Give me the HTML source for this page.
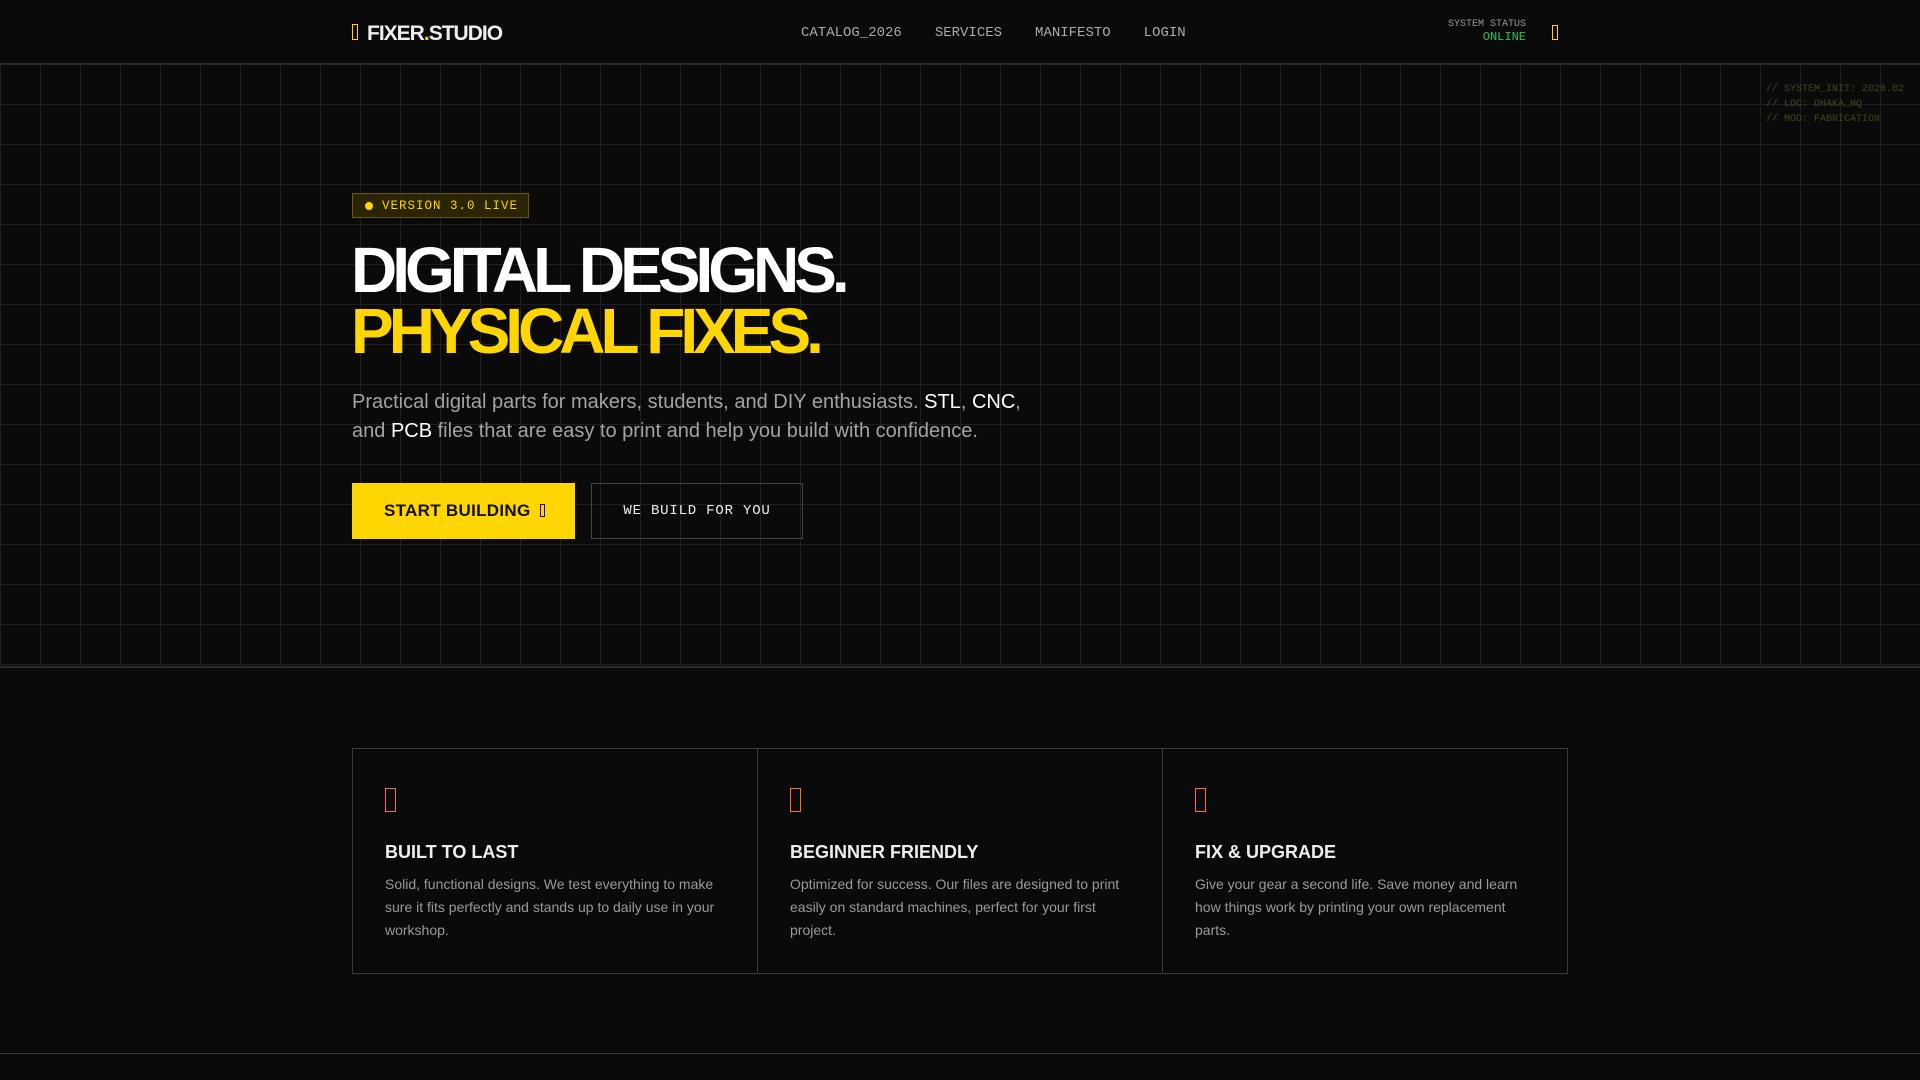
<!DOCTYPE html>
<html><head><meta charset="utf-8"><style>
*{margin:0;padding:0;box-sizing:border-box}
body{width:1920px;height:1080px;background:#0a0a0a;overflow:hidden;font-family:"Liberation Sans",sans-serif;color:#fff;position:relative}
.mono{font-family:"Liberation Mono","DejaVu Sans Mono",monospace}
header{position:absolute;left:0;top:0;width:1920px;height:65px;border-bottom:2px solid #2a2a2a;background:#0a0a0a;z-index:2}
.tofu{display:inline-block;border:1.5px solid currentColor;vertical-align:middle}
.logo{position:absolute;left:352px;top:22px;font-weight:bold;font-size:21px;letter-spacing:-1px;color:#eee}
.logo .tofu{width:6px;height:16px;color:#ffd600;margin-right:9px;margin-top:-4px}
nav{position:absolute;left:801px;top:25px;font-size:14px;color:#aaa;letter-spacing:0}
nav span{margin-right:33px}
.status{position:absolute;right:394px;top:18px;text-align:right;font-size:10px;color:#999;line-height:13px}
.status b{font-weight:normal;color:#22c55e;font-size:12px}
.hicon{position:absolute;left:1552px;top:25px;width:6px;height:15px;color:#ffd600}
.hero{position:absolute;left:0;top:65px;width:1920px;height:603px;border-bottom:2px solid #2a2a2a;
background-image:linear-gradient(#1f1f1f 1px,transparent 1px),linear-gradient(90deg,#1f1f1f 1px,transparent 1px);background-size:40px 40px;background-position:0 -1px}
.corner{position:absolute;left:1766px;top:82px;font-size:10px;line-height:15px;color:#4a4518}
.badge{position:absolute;left:352px;top:193px;width:177px;height:25px;border:1px solid #6b5a00;background:#2a2400;color:#ffd600;font-size:12.5px;letter-spacing:1px;padding:5px 0 0 29px}
.badge:before{content:"";position:absolute;left:12px;top:8px;width:8px;height:8px;border-radius:50%;background:#ffd600}
h1{position:absolute;left:351px;top:240px;font-size:64px;line-height:61px;letter-spacing:-5px;font-weight:bold}
h1 .y{color:#ffd600}
p.lead{position:absolute;left:352px;top:388px;width:680px;font-size:20px;line-height:28.5px;color:#a3a3a3}
p.lead b{font-weight:normal;color:#fff}
.btn1{position:absolute;left:352px;top:483px;width:223px;height:56px;background:#ffd600;color:#111;font-weight:bold;font-size:17px;letter-spacing:0.3px;padding:18px 0 0 32px}
.btn1 .tofu{width:5px;height:13px;margin-left:4px;margin-top:-3px}
.btn2{position:absolute;left:591px;top:483px;width:212px;height:56px;border:1px solid #444;color:#eee;font-size:14px;letter-spacing:0.8px;text-align:center;padding-top:19px}
.cards{position:absolute;left:352px;top:748px;width:1216px;height:226px;border:1px solid #3a3a3a;display:flex}
.card{flex:1;padding:39px 32px 0 32px;border-right:1px solid #3a3a3a}
.card:last-child{border-right:none}
.card .tofu{width:11px;height:24px;color:#f97316;display:block}
.card h3{font-size:18px;margin-top:30px;color:#eee;letter-spacing:0}
.card p{font-size:14px;line-height:23px;color:#9a9a9a;margin-top:10px}
.foot{position:absolute;left:0;top:1053px;width:1920px;border-top:1px solid #3a3a3a}
</style></head><body>
<header>
<div class="logo"><span class="tofu"></span>FIXER<span style="color:#ffd600">.</span>STUDIO</div>
<nav class="mono"><span>CATALOG_2026</span><span>SERVICES</span><span>MANIFESTO</span><span>LOGIN</span></nav>
<div class="status mono">SYSTEM STATUS<br><b>ONLINE</b></div>
<span class="tofu hicon"></span>
</header>
<div class="hero"></div>
<div class="corner mono">// SYSTEM_INIT: 2026.02<br>// LOC: DHAKA_HQ<br>// MOD: FABRICATION</div>
<div class="badge mono">VERSION 3.0 LIVE</div>
<h1>DIGITAL DESIGNS.<br><span class="y">PHYSICAL FIXES.</span></h1>
<p class="lead">Practical digital parts for makers, students, and DIY enthusiasts. <b>STL</b>, <b>CNC</b>, and <b>PCB</b> files that are easy to print and help you build with confidence.</p>
<div class="btn1">START BUILDING <span class="tofu"></span></div>
<div class="btn2 mono">WE BUILD FOR YOU</div>
<div class="cards">
<div class="card"><span class="tofu"></span><h3>BUILT TO LAST</h3><p>Solid, functional designs. We test everything to make sure it fits perfectly and stands up to daily use in your workshop.</p></div>
<div class="card"><span class="tofu"></span><h3>BEGINNER FRIENDLY</h3><p>Optimized for success. Our files are designed to print easily on standard machines, perfect for your first project.</p></div>
<div class="card"><span class="tofu"></span><h3>FIX &amp; UPGRADE</h3><p>Give your gear a second life. Save money and learn how things work by printing your own replacement parts.</p></div>
</div>
<div class="foot"></div>
</body></html>
